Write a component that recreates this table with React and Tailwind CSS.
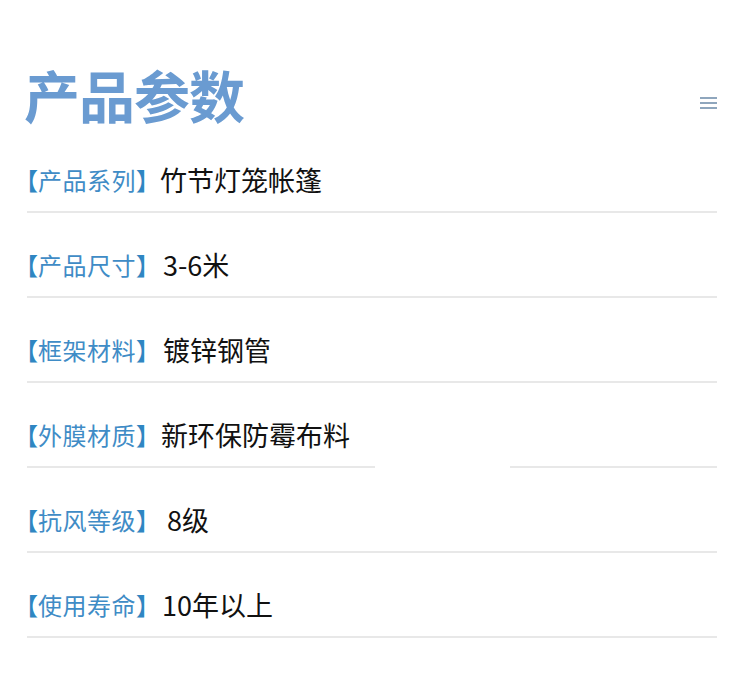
export default function App() {
  const rows = [
    { label: "产品系列", value: "竹节灯笼帐篷", ml: "ml-[0px]" },
    { label: "产品尺寸", value: "3-6米", ml: "ml-[3px]" },
    { label: "框架材料", value: "镀锌钢管", ml: "ml-[3px]" },
    { label: "外膜材质", value: "新环保防霉布料", ml: "ml-[1px]", gap: true },
    { label: "抗风等级", value: "8级", ml: "ml-[7px]" },
    { label: "使用寿命", value: "10年以上", ml: "ml-[2px]" },
  ];
  return (
    <div className="w-[750px] h-[678px] bg-white overflow-hidden" style={{ fontFamily: '"Noto Sans CJK SC", "Noto Sans", sans-serif' }}>
      <div className="h-[128px] pl-[24px] pr-[33px] flex items-start justify-between">
        <div className="mt-[66px] text-[56px] leading-[56px] font-bold text-[#6a9bd1] tracking-[-1px]">产品参数</div>
        <div className="mt-[97px] flex flex-col gap-[3px] w-[17px]">
          <div className="h-[2px] bg-[#8fa6bd]" />
          <div className="h-[2px] bg-[#8fa6bd]" />
          <div className="h-[2px] bg-[#8fa6bd]" />
        </div>
      </div>
      <div className="pl-[27px] pr-[33px] flex flex-col">
        {rows.map((r, i) => (
          <div key={i} className="h-[85px] flex flex-col">
            <div className="flex-1 flex items-end pb-[14px]">
              <div className="h-[34px] flex items-center -ml-[13px] whitespace-nowrap">
                <span className="text-[24px] leading-[34px] text-[#2f86c2] font-medium">【</span>
                <span className="text-[24px] leading-[34px] text-[#3f8cc6] tracking-[0.5px]">{r.label}</span>
                <span className="text-[24px] leading-[34px] text-[#2f86c2] font-medium">】</span>
                <span className={"text-[27px] leading-[34px] text-[#111] " + r.ml}>{r.value}</span>
              </div>
            </div>
            {r.gap ? (
              <div className="h-[2px] flex justify-between">
                <div className="w-[348px] bg-[#e8e8e8]" />
                <div className="w-[207px] bg-[#e8e8e8]" />
              </div>
            ) : (
              <div className="h-[2px] bg-[#e8e8e8]" />
            )}
          </div>
        ))}
      </div>
    </div>
  );
}
